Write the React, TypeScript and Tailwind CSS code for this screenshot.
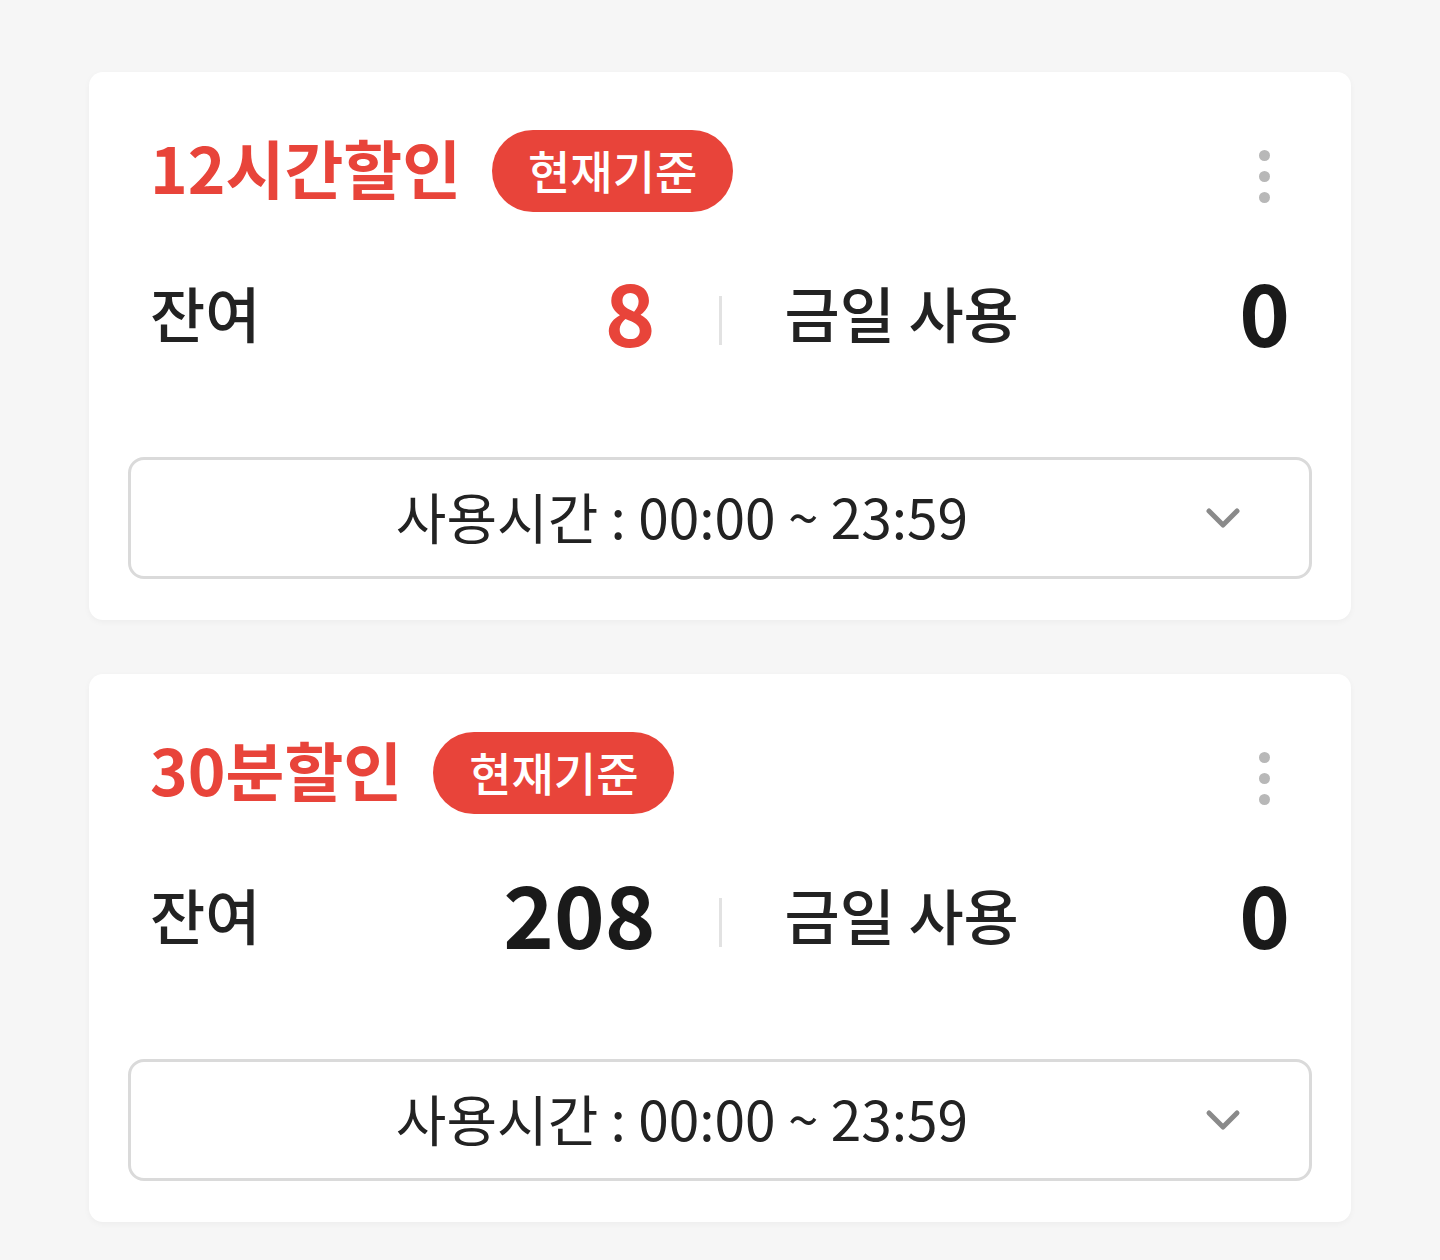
const FONT = "font-['Noto_Sans_CJK_KR','Noto_Sans',sans-serif]";

type Ticket = {
  name: string;
  remain: number;
  remainRed: boolean;
  used: number;
};

const tickets: Ticket[] = [
  { name: "12시간할인", remain: 8, remainRed: true, used: 0 },
  { name: "30분할인", remain: 208, remainRed: false, used: 0 },
];

function Kebab() {
  return (
    <div className="flex flex-col items-center gap-[10px]">
      <span className="block h-[11px] w-[11px] rounded-full bg-[#b8b8b8]" />
      <span className="block h-[11px] w-[11px] rounded-full bg-[#b8b8b8]" />
      <span className="block h-[11px] w-[11px] rounded-full bg-[#b8b8b8]" />
    </div>
  );
}

function TicketCard({ ticket }: { ticket: Ticket }) {
  return (
    <div className="rounded-[14px] bg-white px-[39px] pt-[58px] pb-[41px] shadow-[0_2px_6px_rgba(0,0,0,0.04)]">
      <div className="flex h-[82px] items-center pl-[22px] pr-[42px]">
        <span className="mb-[10px] text-[64px] leading-none font-bold text-[#e8443a]">
          {ticket.name}
        </span>
        <span className="ml-[31px] flex h-[82px] items-center rounded-full bg-[#e8443a] px-[36px] pb-[4px] text-[46px] leading-none font-medium text-white">
          현재기준
        </span>
        <div className="ml-auto mt-[10px]">
          <Kebab />
        </div>
      </div>

      <div className="mt-[55px] grid h-[80px] grid-cols-[1fr_auto_1fr] items-center gap-x-[63px] px-[22px]">
        <div className="flex items-center justify-between">
          <span className="text-[60px] leading-none font-medium text-[#222]">잔여</span>
          <span
            className={`mb-[4px] text-[86px] leading-none font-bold ${
              ticket.remainRed ? "text-[#e8443a]" : "text-[#1a1a1a]"
            }`}
          >
            {ticket.remain}
          </span>
        </div>
        <span className="mt-[16px] block h-[49px] w-[3px] bg-[#e2e2e2]" />
        <div className="flex items-center justify-between">
          <span className="text-[60px] leading-none font-medium text-[#222]">금일 사용</span>
          <span className="mb-[4px] text-[86px] leading-none font-bold text-[#1a1a1a]">
            {ticket.used}
          </span>
        </div>
      </div>

      <div className="relative mt-[110px] flex h-[122px] items-center justify-center rounded-[16px] border-[3px] border-[#dadada] pr-[76px]">
        <span className="mb-[6px] text-[55px] leading-none text-[#222]">
          사용시간 : 00:00 ~ 23:59
        </span>
        <svg
          className="absolute top-1/2 right-[68px] -translate-y-1/2"
          width="36"
          height="22"
          viewBox="0 0 36 22"
          fill="none"
        >
          <polyline
            points="4,4 18,18 32,4"
            stroke="#8a8a8a"
            strokeWidth="5"
            strokeLinecap="round"
            strokeLinejoin="round"
          />
        </svg>
      </div>
    </div>
  );
}

export default function App() {
  return (
    <div className={`min-h-[1260px] bg-[#f6f6f6] pt-[72px] ${FONT}`}>
      <div className="mx-auto flex w-[1262px] flex-col gap-[54px]">
        {tickets.map((t) => (
          <TicketCard key={t.name} ticket={t} />
        ))}
      </div>
    </div>
  );
}
